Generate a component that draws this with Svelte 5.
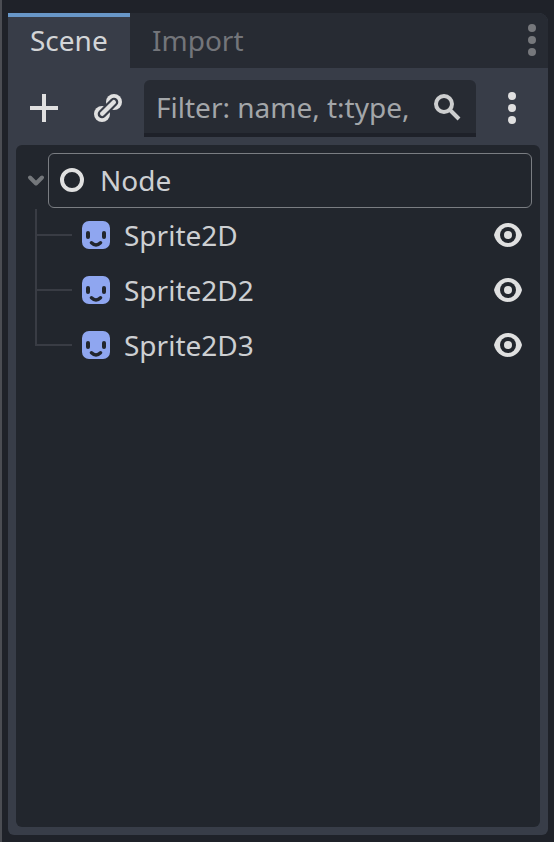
<script>
  const sprites = ['Sprite2D', 'Sprite2D2', 'Sprite2D3'];
</script>

{#snippet dots()}
  <svg class="dots" width="8" height="32" viewBox="0 0 8 32">
    <circle cx="4" cy="4" r="4" /><circle cx="4" cy="16" r="4" /><circle cx="4" cy="28" r="4" />
  </svg>
{/snippet}

<div class="editor">
  <div class="dock">
    <div class="tabs">
      <div class="tab active">Scene</div>
      <div class="tab">Import</div>
      <div class="tab-menu">{@render dots()}</div>
    </div>
    <div class="toolbar">
      <svg class="add" width="28" height="28" viewBox="0 0 28 28">
        <path d="M12 0h4v12h12v4H16v12h-4V16H0v-4h12z" fill="#e0e0e0" />
      </svg>
      <svg class="link" width="32" height="32" viewBox="0 0 32 32">
        <circle cx="22" cy="10" r="8" fill="#e0e0e0" />
        <circle cx="10" cy="22" r="8" fill="#e0e0e0" />
        <path d="M10 22L22 10" stroke="#383d48" stroke-width="8.6" stroke-linecap="round" />
        <path d="M10.200 21.800L21.800 10.200" stroke="#e0e0e0" stroke-width="4.400" stroke-linecap="round" />
      </svg>
      <div class="filter">
        <span>Filter: name, t:type,</span>
        <svg width="32" height="32" viewBox="0 0 32 32" fill="none" stroke="#cdcecf" stroke-width="4">
          <circle cx="12" cy="12" r="8" />
          <path d="M17 17L27 27" stroke-linecap="butt" />
        </svg>
      </div>
      <div class="menu">{@render dots()}</div>
    </div>
    <div class="tree">
      <div class="root">
        <svg class="arrow" width="24" height="24" viewBox="0 0 24 24">
          <path d="M6 9.500L12 15.500L18 9.500" fill="none" stroke="#74777b" stroke-width="4" stroke-linecap="round" stroke-linejoin="round" />
        </svg>
        <div class="selection">
          <svg width="24" height="24" viewBox="0 0 24 24">
            <circle cx="12" cy="12" r="10" fill="none" stroke="#e0e0e0" stroke-width="4" />
          </svg>
          <span>Node</span>
        </div>
      </div>
      <div class="children">
        {#each sprites as name}
          <div class="row">
            <i class="branch"></i>
            <svg class="face" width="28" height="28" viewBox="0 0 28 28">
              <rect width="28" height="28" rx="7" fill="#8fa6f0" />
              <rect x="4" y="10" width="4" height="8" rx="2" fill="#22262d" />
              <rect x="20" y="10" width="4" height="8" rx="2" fill="#22262d" />
              <path d="M9.500 21.800Q14 26.200 18.500 21.800" fill="none" stroke="#22262d" stroke-width="3.400" stroke-linecap="round" />
            </svg>
            <span>{name}</span>
            <svg class="eye" width="28" height="24" viewBox="0 0 28 24">
              <path d="M14 0C6.500 0 1.500 6 0 12C1.500 18 6.500 24 14 24S26.500 18 28 12C26.500 6 21.500 0 14 0z" fill="#e0e0e0" />
              <circle cx="14" cy="12" r="8" fill="#22262d" />
              <circle cx="14" cy="12" r="4" fill="#e0e0e0" />
            </svg>
          </div>
        {/each}
      </div>
    </div>
  </div>
</div>

<style>
  .editor {
    box-sizing: border-box;
    width: 554px;
    height: 842px;
    padding: 13px 6px 7px;
    border-left: 2px solid #4b4d53;
    background: #1f2229;
    color: #cdcfd2;
    font: 28px/38px "Noto Sans", sans-serif;
    white-space: nowrap;
  }
  svg { display: block; flex: none; }
  .dock {
    height: 822px;
    width: 540px;
    background: #383d48;
    border-radius: 0 9px 6px 6px;
    overflow: hidden;
  }
  .tabs { display: flex; height: 55px; background: #272b33; }
  .tab { box-sizing: border-box; padding: 8px 22px 0; color: #73757a; }
  .active {
    width: 122px;
    padding-top: 4px;
    border-top: 4px solid #6897c8;
    background: #383d48;
    color: #d3d5d7;
  }
  .tab-menu { margin: 11px 12px 0 auto; color: #76787c; }
  .dots { fill: currentColor; }
  .toolbar { display: flex; height: 77px; }
  .add { margin: 26px 0 0 22px; }
  .link { margin: 24px 0 0 34px; }
  .filter {
    box-sizing: border-box;
    display: flex;
    width: 332px;
    height: 57px;
    margin: 12px 0 0 20px;
    padding: 8px 12px 0;
    border-bottom: 4px solid #1e2129;
    border-radius: 6px 6px 0 0;
    background: #272b33;
    color: #a3a6a9;
  }
  .filter svg { margin: 4px 0 0 auto; }
  .menu { margin: 24px 0 0 32px; color: #e0e0e0; }
  .tree {
    box-sizing: border-box;
    height: 682px;
    margin: 0 8px;
    padding: 8px;
    border-radius: 6px;
    background: #22262d;
  }
  .root { display: flex; height: 55px; }
  .arrow { margin: 15px 0 0; }
  .selection {
    box-sizing: border-box;
    display: flex;
    width: 484px;
    height: 55px;
    padding: 0 11px;
    border: 1px solid #7a7d82;
    border-radius: 6px;
  }
  .selection svg { margin-top: 14px; }
  .selection span { margin: 7px 0 0 16px; }
  .children { padding-top: 1px; }
  .row { display: flex; height: 55px; padding: 0 10px 0 11px; }
  .branch {
    box-sizing: border-box;
    width: 37px;
    height: 27px;
    border-left: 2px solid #393c44;
    border-bottom: 2px solid #393c44;
  }
  .row:not(:last-child) .branch { position: relative; }
  .row:not(:last-child) .branch::after {
    content: "";
    position: absolute;
    left: -2px;
    top: 27px;
    width: 2px;
    height: 28px;
    background: #393c44;
  }
  .face { margin: 12px 14px 0 10px; }
  .row span { margin-top: 7px; }
  .eye { margin: 14px 0 0 auto; }
</style>
